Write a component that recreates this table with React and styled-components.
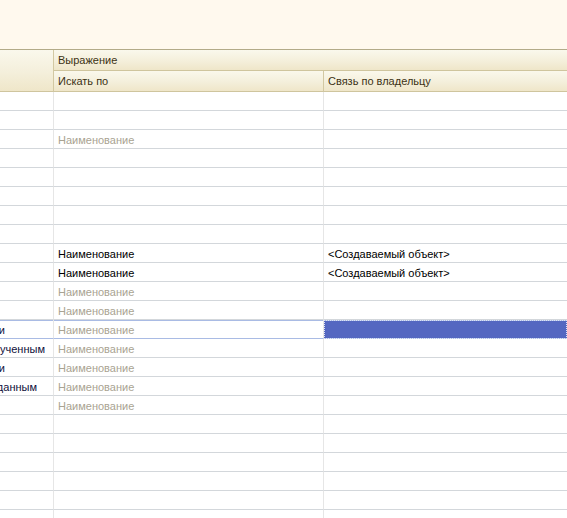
import styled, { createGlobalStyle } from "styled-components";

const GlobalStyle = createGlobalStyle`
  html, body {
    margin: 0;
    padding: 0;
    background: #fff;
    overflow: hidden;
  }
  body {
    font-family: "Liberation Sans", Arial, sans-serif;
    font-size: 11px;
  }
`;

const rows = [
  {},
  {},
  { search: "Наименование", muted: true },
  {},
  {},
  {},
  {},
  {},
  { search: "Наименование", owner: "<Создаваемый объект>" },
  { search: "Наименование", owner: "<Создаваемый объект>" },
  { search: "Наименование", muted: true },
  { search: "Наименование", muted: true },
  { name: "Заполнять по связи", end: 48, search: "Наименование", muted: true, selected: true },
  { name: "Отбор по полученным", end: 8, search: "Наименование", muted: true },
  { name: "Ввод на основании", end: 48, search: "Наименование", muted: true },
  { name: "Отбор по созданным", end: 16, search: "Наименование", muted: true },
  { search: "Наименование", muted: true },
  {},
  {},
  {},
  {},
  {},
  {},
];

export default function App() {
  return (
    <Page>
      <GlobalStyle />
      <TopPanel />
      <Table>
        <HeadCorner />
        <HeadGroup>Выражение</HeadGroup>
        <HeadCell>Искать по</HeadCell>
        <HeadCell $last>Связь по владельцу</HeadCell>
        {rows.map((r, i) => (
          <Row key={i} $selected={r.selected}>
            <NameCell $end={r.end || 0}>
              {r.name && <span>{r.name}</span>}
            </NameCell>
            <Cell $muted={r.muted}>{r.search}</Cell>
            <OwnerCell $selected={r.selected}>{r.owner}</OwnerCell>
          </Row>
        ))}
      </Table>
    </Page>
  );
}

const Page = styled.div`
  width: 567px;
  height: 518px;
  overflow: hidden;
  display: flex;
  flex-direction: column;
`;

const TopPanel = styled.div`
  height: 49px;
  flex-shrink: 0;
  background: #fff9ee;
  border-bottom: 1px solid #b3ab88;
`;

const Table = styled.div`
  display: grid;
  grid-template-columns: 54px 270px 1fr;
  grid-auto-rows: min-content;
`;

const headBg = `linear-gradient(to bottom, #faf8ec 0%, #f4efdb 55%, #efe6c9 100%)`;

const HeadCorner = styled.div`
  grid-row: span 2;
  background: ${headBg};
  border-right: 1px solid #d2c8a2;
  border-bottom: 1px solid #cfc59e;
`;

const HeadGroup = styled.div`
  grid-column: span 2;
  height: 20px;
  line-height: 20px;
  padding-left: 4px;
  color: #3c3214;
  background: ${headBg};
  border-bottom: 1px solid #cfc59e;
`;

const HeadCell = styled.div`
  height: 20px;
  line-height: 20px;
  padding-left: 4px;
  color: #3c3214;
  background: ${headBg};
  border-bottom: 1px solid #cfc59e;
  border-right: ${(p) => (p.$last ? "none" : "1px solid #d2c8a2")};
  white-space: nowrap;
`;

const Row = styled.div`
  display: contents;
  & > div {
    height: 17px;
    padding-top: 1px;
    line-height: 18px;
    border-bottom: 1px solid ${(p) => (p.$selected ? "#a9bbe4" : "#d3d7db")};
    box-shadow: ${(p) => (p.$selected ? "inset 0 1px 0 #a9bbe4" : "none")};
  }
`;

const Cell = styled.div`
  padding-left: 4px;
  white-space: nowrap;
  overflow: hidden;
  border-right: 1px solid #e6e6e6;
  color: ${(p) => (p.$muted ? "#a9a392" : "#000")};
`;

const NameCell = styled.div`
  display: flex;
  justify-content: flex-end;
  overflow: hidden;
  white-space: nowrap;
  padding-right: ${(p) => p.$end}px;
  border-right: 1px solid #e6e6e6;
  color: #10103c;
  & > span {
    flex-shrink: 0;
  }
`;

const OwnerCell = styled.div`
  padding-left: 4px;
  white-space: nowrap;
  overflow: hidden;
  color: #000;
  background: ${(p) => (p.$selected ? "#5467c1" : "transparent")};
  outline: ${(p) => (p.$selected ? "1px dotted #dfe4f6" : "none")};
  outline-offset: -1px;
`;
